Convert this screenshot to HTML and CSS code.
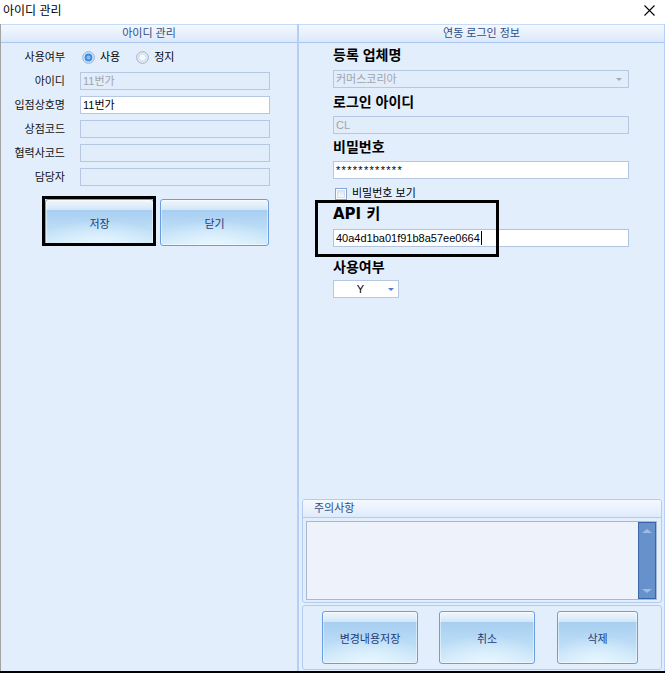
FILE: index.html
```html
<!DOCTYPE html>
<html lang="ko">
<head>
<meta charset="utf-8">
<title>아이디 관리</title>
<link rel="stylesheet" href="styles.css">
</head>
<body>
<div class="window">
  <div class="titlebar">
    <span class="title">아이디 관리</span>
    <svg class="close" width="11" height="11" viewBox="0 0 11 11"><path d="M0.5 0.5L10.5 10.5M10.5 0.5L0.5 10.5" stroke="#000" stroke-width="1.1" fill="none"/></svg>
  </div>
  <div class="main">
    <section class="panel left">
      <div class="phead">아이디 관리</div>
      <div class="lform">
        <div class="row">
          <span class="lbl">사용여부</span>
          <div class="radios">
            <svg class="radio" width="13" height="13" viewBox="0 0 13 13"><circle cx="6.5" cy="6.5" r="5.8" fill="#dbe8f7" stroke="#8eb0da"/><circle cx="6.5" cy="6.5" r="3.9" fill="#3d8ae0"/><circle cx="6.5" cy="6.5" r="2" fill="#86c0f2"/></svg>
            <span class="rtext">사용</span>
            <svg class="radio r2" width="13" height="13" viewBox="0 0 13 13"><circle cx="6.5" cy="6.5" r="5.8" fill="#eef3f9" stroke="#98aecb"/><circle cx="6.5" cy="6.5" r="3.8" fill="#f6f9fc" stroke="#c9d6e6"/></svg>
            <span class="rtext">정지</span>
          </div>
        </div>
        <div class="row"><span class="lbl">아이디</span><div class="field dis">11번가</div></div>
        <div class="row"><span class="lbl">입점상호명</span><div class="field en">11번가</div></div>
        <div class="row"><span class="lbl">상점코드</span><div class="field dis"></div></div>
        <div class="row"><span class="lbl">협력사코드</span><div class="field dis"></div></div>
        <div class="row"><span class="lbl">담당자</span><div class="field dis"></div></div>
      </div>
      <div class="lbtns">
        <div class="focus"><button class="btn lbtn">저장</button></div>
        <button class="btn lbtn close-btn">닫기</button>
      </div>
    </section>
    <div class="divider"></div>
    <section class="panel right">
      <div class="phead">연동 로그인 정보</div>
      <div class="rform">
        <div class="rlabel l1">등록 업체명</div>
        <div class="rfield dis sel s1"><span>커머스코리아</span><i class="arrow grey"></i></div>
        <div class="rlabel l2">로그인 아이디</div>
        <div class="rfield dis f2">CL</div>
        <div class="rlabel l3">비밀번호</div>
        <div class="rfield en f3"><span class="pw">************</span></div>
        <div class="chkrow"><span class="chk"></span><span class="chktext">비밀번호 보기</span></div>
        <div class="rlabel api">API 키</div>
        <div class="rfield en f4">40a4d1ba01f91b8a57ee0664<span class="caret"></span></div>
        <div class="rlabel l5">사용여부</div>
        <div class="rfield en ysel"><span class="yval">Y</span><i class="arrow blue"></i></div>
      </div>
      <div class="mark"></div>
      <div class="spacer"></div>
      <div class="notice">
        <div class="nhead">주의사항</div>
        <div class="nbody">
          <div class="memo">
            <div class="scroll"><i class="up"></i><i class="down"></i></div>
          </div>
        </div>
      </div>
      <div class="bgroup">
        <button class="btn bb b1">변경내용저장</button>
        <button class="btn bb b2">취소</button>
        <button class="btn bb b3">삭제</button>
      </div>
    </section>
  </div>
  <div class="bottombar"></div>
</div>
</body>
</html>
```

FILE: styles.css
```css
*, *::before, *::after { box-sizing: border-box; margin: 0; padding: 0; }
html, body { width: 665px; height: 673px; overflow: hidden; background: #fff; }
body { font-family: "Liberation Sans", "Noto Sans CJK KR", sans-serif; font-size: 11px; color: #000; }

.window { display: flex; flex-direction: column; height: 673px; }

.titlebar { height: 24px; flex: none; display: flex; align-items: center; justify-content: space-between; padding: 0 10px 0 3px; background: #fff; }
.title { font-size: 12px; line-height: 20px; margin-top: -2px; }
.close { display: block; margin-top: -3px; }

.main { flex: 1; display: flex; background: #e3eefd; min-height: 0; }
.panel { display: flex; flex-direction: column; background: #e3eefd; }
.left { width: 297px; border-left: 1px solid #a3a3a3; }
.divider { width: 2px; background: #b4cff3; }
.right { width: 366px; border-right: 1px solid #b4cff3; position: relative; }

.phead { height: 19px; flex: none; border-top: 1px solid #c6dcf6; border-bottom: 1px solid #a8c6ee; background: linear-gradient(#f5f9ff, #dbe8fa); text-align: center; font-size: 11px; line-height: 17px; color: #2d4d85; }

/* left form */
.lform { padding-top: 5px; display: flex; flex-direction: column; gap: 6px; }
.row { display: flex; align-items: center; height: 18px; }
.lbl { width: 64px; text-align: right; margin-right: 15px; line-height: 18px; color: #111; }
.field { width: 190px; height: 18px; border: 1px solid #b5c7e2; padding-left: 2px; line-height: 16px; }
.dis { background: #e2edfc; color: #a0a4aa; }
.en { background: #fff; color: #000; }
.radios { display: flex; align-items: center; margin-left: 2px; }
.radio { display: block; }
.rtext { margin-left: 5px; line-height: 18px; }
.r2 { margin-left: 16px; }

.lbtns { display: flex; align-items: flex-start; margin-top: 13px; padding-left: 44px; }
.focus { position: relative; }
.focus::after { content: ""; position: absolute; left: -3px; top: -3px; width: 114px; height: 50px; border: 3px solid #000; }
.close-btn { margin-left: 6px; }

.btn { display: block; border: 1px solid #6c9de0; border-radius: 3px; font-family: "Liberation Sans", "Noto Sans CJK KR", sans-serif; font-size: 11px; color: #1d3c78;
  background:
    radial-gradient(ellipse 60% 55% at 50% 100%, rgba(232,247,255,0.95), rgba(232,247,255,0) 100%),
    linear-gradient(to bottom, #f1f7fd 0, #d2e6f8 10px, #a7cef1 10px, #b8daf5 55%, #d2ebfb 100%);
  box-shadow: inset 0 0 0 1px rgba(255,255,255,0.45); }
.lbtn { width: 109px; height: 47px; }

/* right form */
.rform { padding-left: 34px; display: flex; flex-direction: column; }
.rlabel { font-size: 14px; font-weight: bold; height: 20px; line-height: 20px; color: #000; }
.l1 { margin-top: 2px; }
.l2 { margin-top: 4px; }
.l3 { margin-top: 3px; }
.l5 { margin-top: 10px; }
.api { margin-top: 4px; font-family: "DejaVu Sans", "Noto Sans CJK KR", sans-serif; font-size: 15px; }
.rfield { width: 296px; height: 18px; border: 1px solid #b5c7e2; padding-left: 2px; line-height: 16px; }
.sel { display: flex; align-items: center; justify-content: space-between; padding-right: 6px; }
.s1 { margin-top: 5px; }
.f2 { margin-top: 4px; }
.f3 { margin-top: 4px; }
.f4 { margin-top: 5px; border-color: #b0c4e0; }
.pw { letter-spacing: 1.3px; }
.caret { display: inline-block; width: 1px; height: 14px; background: #000; vertical-align: -3px; margin-left: 1px; }
.arrow { display: block; width: 0; height: 0; border-left: 3.5px solid transparent; border-right: 3.5px solid transparent; }
.arrow.grey { border-top: 3px solid #a0aab8; }
.arrow.blue { border-top: 3px solid #4f7cc4; }
.ysel { width: 66px; margin-top: 3px; display: flex; align-items: center; padding-right: 4px; }
.yval { flex: 1; text-align: center; padding-right: 3px; }

.chkrow { display: flex; align-items: center; height: 13px; margin-top: 8px; padding-left: 2px; }
.chk { width: 12px; height: 12px; border: 1px solid #86a6d6; background: #fff; position: relative; }
.chk::after { content: ""; position: absolute; left: 1px; top: 1px; right: 1px; bottom: 1px; border: 1px solid #d2deef; background: linear-gradient(#dbe6f5, #f4f8fd); }
.chktext { margin-left: 5px; line-height: 13px; }

.mark { position: absolute; left: 16px; top: 176px; width: 184px; height: 57px; border: 3px solid #000; }

.spacer { flex: 1; }

.notice { height: 104px; margin: 0 2px 2px 3px; border: 1px solid #b3cbee; border-radius: 3px; display: flex; flex-direction: column; }
.nhead { height: 18px; border-bottom: 1px solid #b3cbee; background: linear-gradient(#f5f9ff, #dfebfb); padding-left: 11px; line-height: 17px; color: #2d4d85; border-radius: 2px 2px 0 0; }
.nbody { flex: 1; padding: 3px 4px 2px 3px; }
.memo { height: 79px; background: #eef2fa; border: 1px solid #a6b9d4; display: flex; justify-content: flex-end; }
.scroll { width: 18px; height: 100%; background: #6791cb; border: 1px solid #3b65a6; display: flex; flex-direction: column; justify-content: space-between; align-items: center; padding: 6px 0 5px; }
.up, .down { display: block; width: 0; height: 0; border-left: 5px solid transparent; border-right: 5px solid transparent; }
.up { border-bottom: 4px solid #9fbce6; }
.down { border-top: 4px solid #9fbce6; }

.bgroup { height: 65px; margin: 0 2px 1px 3px; border: 1px solid #b3cbee; border-radius: 3px; display: flex; align-items: center; padding-left: 19px; }
.bb { height: 53px; }
.b1 { width: 96px; }
.b2 { width: 96px; margin-left: 21px; }
.b3 { width: 81px; margin-left: 22px; }

.bottombar { height: 2px; flex: none; background: #000; }
```
